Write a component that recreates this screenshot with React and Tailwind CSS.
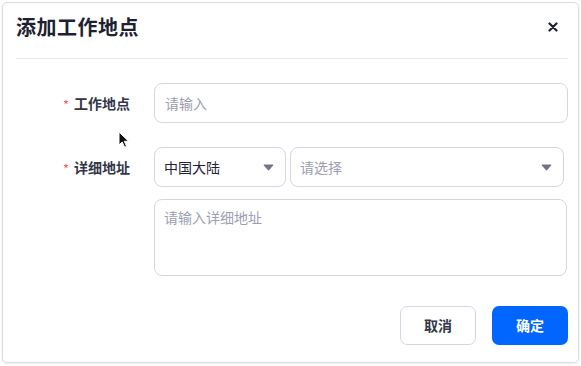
import React from 'react';

const font = { fontFamily: '"Noto Sans CJK SC", "Noto Sans", sans-serif' };

const Caret = () => (
  <svg width="11" height="7" viewBox="0 0 11 7" className="shrink-0">
    <path d="M1.2 0.5 H9.8 Q10.8 0.5 10.1 1.4 L6.2 6 Q5.5 6.8 4.8 6 L0.9 1.4 Q0.2 0.5 1.2 0.5 Z" fill="#72758a" />
  </svg>
);

const Label = ({ children }) => (
  <div className="w-[114px] shrink-0 flex items-center justify-end gap-[5px] h-[40px]">
    <span className="text-[#f25c5c] text-[13px] leading-none mt-[2px]">*</span>
    <span className="text-[14px] font-semibold text-[#33364a]">{children}</span>
  </div>
);

export default function App() {
  return (
    <div className="w-[581px] h-[366px] bg-white relative" style={font}>
      <div className="absolute left-[2px] top-[2px] w-[577px] h-[361px] bg-white border border-[#dcdcdf] rounded-[5px] shadow-[0_1px_3px_rgba(0,0,0,0.08)] flex flex-col">
        {/* header */}
        <div className="h-[48px] flex items-center justify-between pl-[13px] pr-[20px]">
          <h2 className="text-[20px] font-bold text-[#1d2131] tracking-[0.5px]">添加工作地点</h2>
          <svg width="10" height="10" viewBox="0 0 10 10">
            <path d="M1.5 1.5 L8.5 8.5 M8.5 1.5 L1.5 8.5" stroke="#1d2131" strokeWidth="2.2" strokeLinecap="round" />
          </svg>
        </div>
        <div className="mt-[7px] ml-[13px] w-[552px] h-px bg-[#e6e5f0]" />

        {/* form */}
        <div className="pl-[13px] pt-[24px] flex flex-col gap-[24px]">
          <div className="flex gap-[24px]">
            <Label>工作地点</Label>
            <div className="w-[414px] h-[40px] border border-[#d6d6e3] rounded-[8px] flex items-center px-[10px] text-[14px] text-[#9c9eb2]">
              请输入
            </div>
          </div>
          <div className="flex gap-[24px]">
            <Label>详细地址</Label>
            <div className="flex flex-col gap-[12px]">
              <div className="flex gap-[4px]">
                <div className="w-[132px] h-[40px] border border-[#d6d6e3] rounded-[8px] flex items-center justify-between pl-[9px] pr-[11px] text-[14px] text-[#1f2233]">
                  <span>中国大陆</span>
                  <Caret />
                </div>
                <div className="w-[274px] h-[40px] border border-[#d6d6e3] rounded-[8px] flex items-center justify-between pl-[9px] pr-[11px] text-[14px] text-[#9c9eb2]">
                  <span>请选择</span>
                  <Caret />
                </div>
              </div>
              <div className="w-[413px] h-[77px] border border-[#d6d6e3] rounded-[8px] px-[9px] pt-[7px] text-[14px] text-[#9c9eb2]">
                请输入详细地址
              </div>
            </div>
          </div>
        </div>

        {/* footer */}
        <div className="mt-auto mb-[17px] flex justify-end gap-[16px] pr-[10px]">
          <button className="w-[76px] h-[39px] border border-[#d6d6e3] rounded-[7px] bg-white text-[14px] font-bold text-[#33364a]">取消</button>
          <button className="w-[76px] h-[39px] rounded-[7px] bg-[#0066ff] text-[14px] font-bold text-white">确定</button>
        </div>
      </div>

      {/* mouse pointer */}
      <svg className="absolute left-[118px] top-[131px]" width="13" height="18" viewBox="0 0 13 18">
        <path d="M1 1 L1 14 L4.2 11 L6.6 16.2 L8.6 15.3 L6.3 10.3 L10.6 10.3 Z" fill="#111" stroke="#fff" strokeWidth="1" strokeLinejoin="round" />
      </svg>
    </div>
  );
}
